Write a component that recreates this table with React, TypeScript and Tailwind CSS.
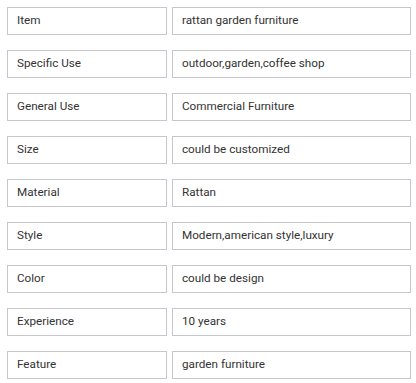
const rows: [string, string][] = [
  ["Item", "rattan garden furniture"],
  ["Specific Use", "outdoor,garden,coffee shop"],
  ["General Use", "Commercial Furniture"],
  ["Size", "could be customized"],
  ["Material", "Rattan"],
  ["Style", "Modern,american style,luxury"],
  ["Color", "could be design"],
  ["Experience", "10 years"],
  ["Feature", "garden furniture"],
];

export default function App() {
  return (
    <div className="w-[416px] h-[383px] bg-white pt-[7px] pl-[7px] pr-[5px] font-['Roboto',sans-serif] text-[11.7px] text-[#333]">
      <div className="flex flex-col gap-[15px]">
        {rows.map(([k, v]) => (
          <div key={k} className="flex gap-[5px]">
            <div className="w-[160px] h-[28px] border border-[#c6c6cc] pl-[9px] flex items-center">{k}</div>
            <div className="flex-1 h-[28px] border border-[#c6c6cc] pl-[9px] flex items-center">{v}</div>
          </div>
        ))}
      </div>
    </div>
  );
}
